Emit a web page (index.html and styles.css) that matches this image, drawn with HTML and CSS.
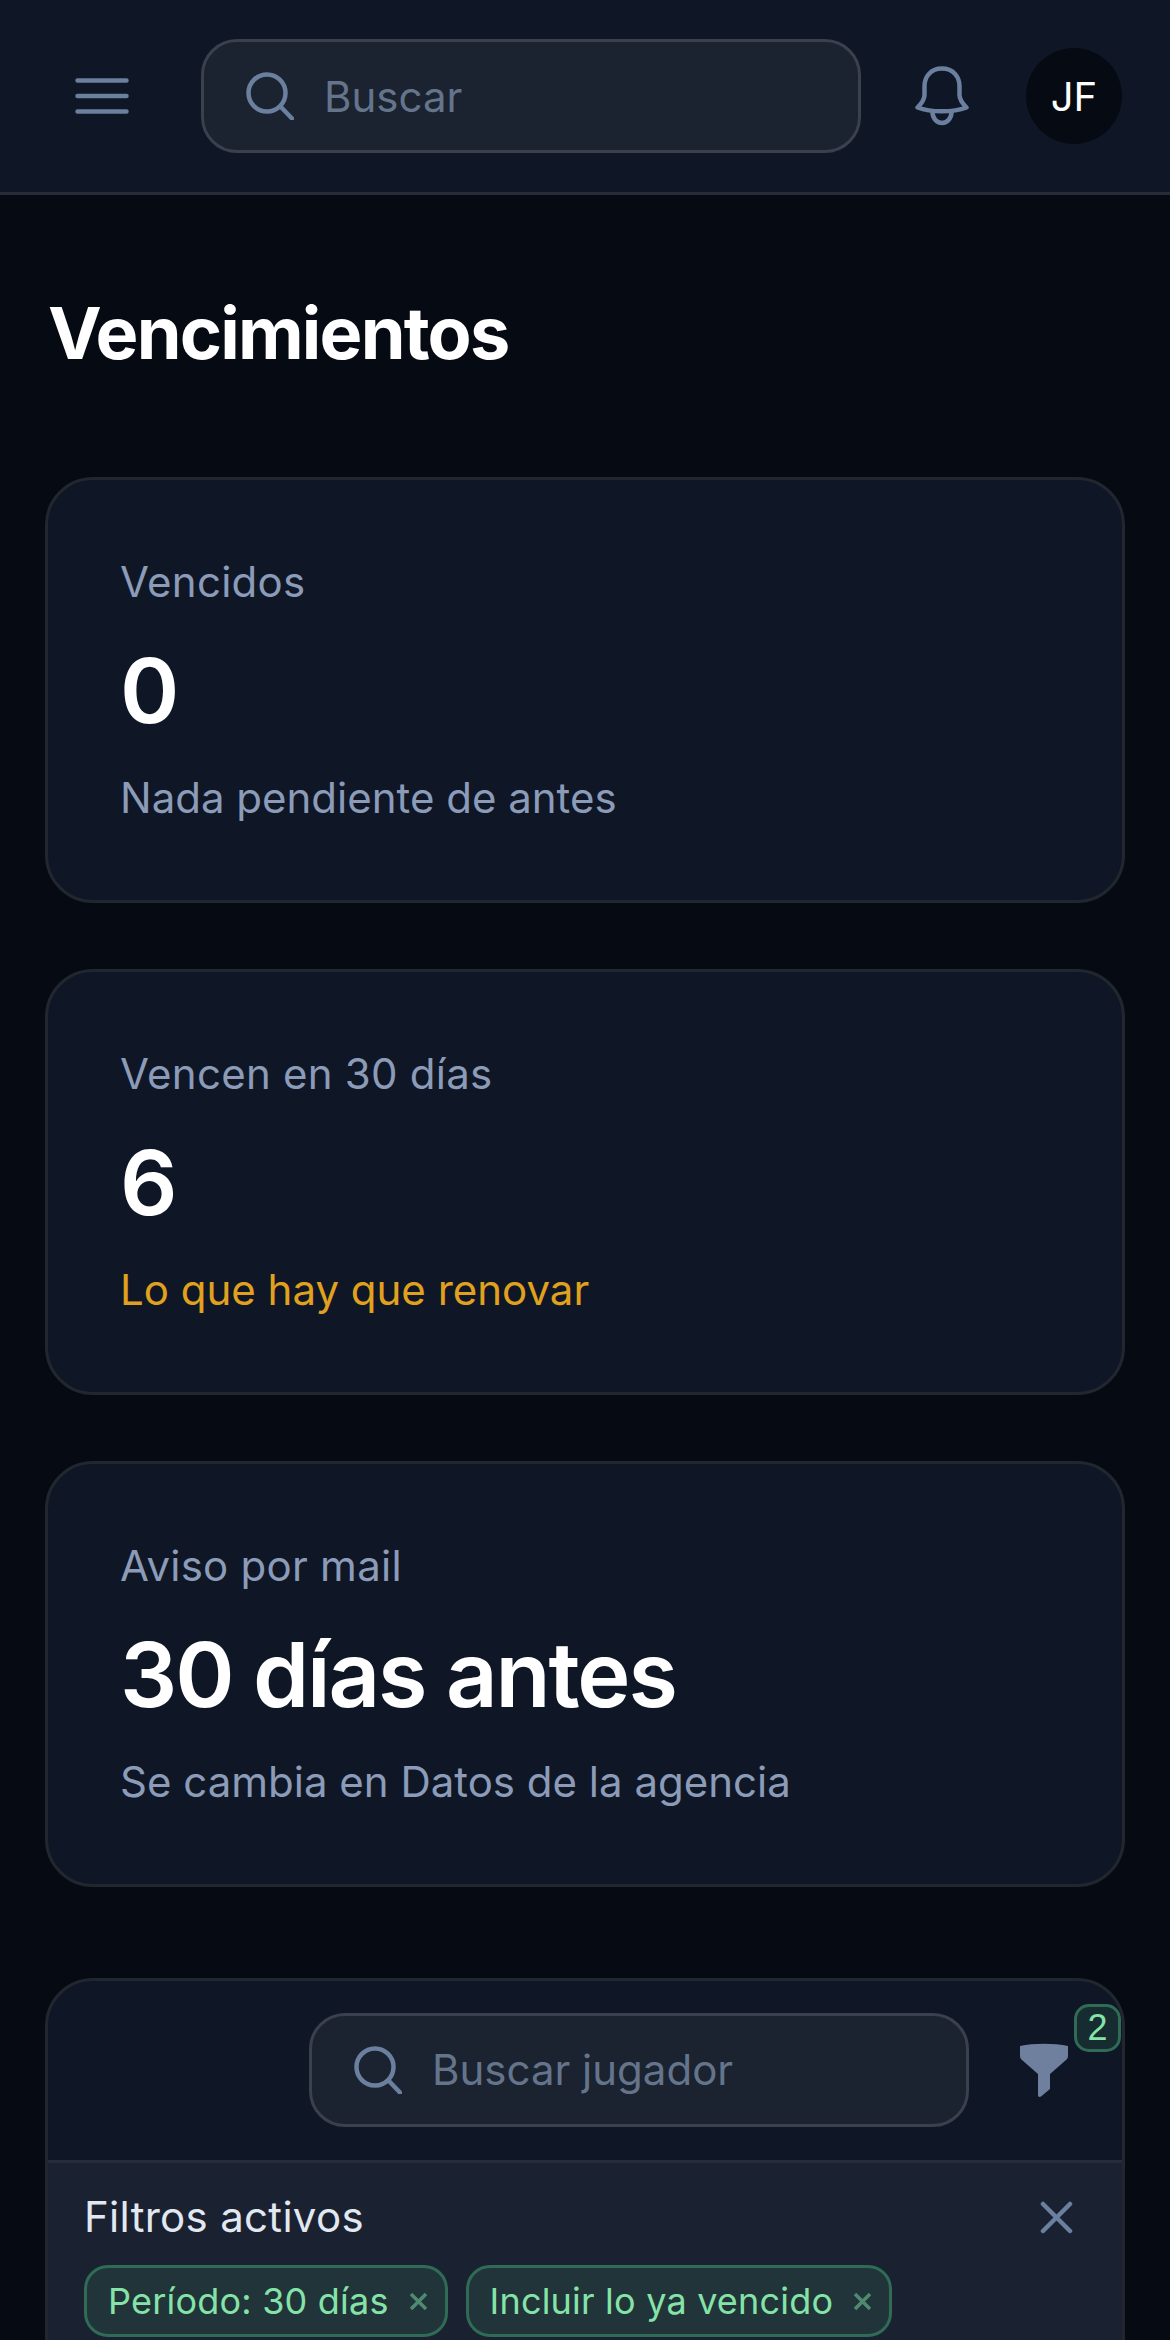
FILE: index.html
```html
<!DOCTYPE html>
<html lang="es">
<head>
  <meta charset="UTF-8">
  <meta name="viewport" content="width=device-width, initial-scale=1.0">
  <title>Vencimientos</title>
  <link rel="stylesheet" href="styles.css">
</head>
<body>
  <!-- Top bar -->
  <header class="topbar">
    <button class="menu-btn" aria-label="Menu">
      <svg width="54" height="36" viewBox="0 0 54 36" fill="none" stroke="#6b7f9f" stroke-width="4.5" stroke-linecap="round">
        <path d="M2.5 2.5H51.5M2.5 18H51.5M2.5 33.5H51.5"/>
      </svg>
    </button>
    <div class="search search-top">
      <svg class="search-icon" width="48" height="48" viewBox="0 0 48 48" fill="none" stroke="#6b7f9f" stroke-width="4.5" stroke-linecap="round">
        <circle cx="21" cy="21" r="18.5"/>
        <path d="M34.5 34.5L46 46.5"/>
      </svg>
      <span class="search-text">Buscar</span>
    </div>
    <button class="bell-btn" aria-label="Avisos">
      <svg width="54" height="60" viewBox="0 0 54 60" fill="none" stroke="#6b7f9f" stroke-width="4.5" stroke-linejoin="round">
        <path d="M27 2.5C16 2.5 9.5 10.5 9.5 20V29C9.5 34 6 38 2.5 41.5C16 46.5 38 46.5 51.5 41.5C48 38 44.500 34 44.500 29V20C44.500 10.5 38 2.500 27 2.500Z"/>
        <path d="M17.500 46C17.500 52 21.500 57 27 57C32.500 57 36.500 52 36.500 46"/>
      </svg>
    </button>
    <div class="avatar">JF</div>
  </header>

  <main class="content">
    <h1>Vencimientos</h1>

    <section class="card">
      <div class="card-label">Vencidos</div>
      <div class="card-value">0</div>
      <div class="card-note">Nada pendiente de antes</div>
    </section>

    <section class="card">
      <div class="card-label">Vencen en 30 días</div>
      <div class="card-value">6</div>
      <div class="card-note amber">Lo que hay que renovar</div>
    </section>

    <section class="card">
      <div class="card-label">Aviso por mail</div>
      <div class="card-value">30 días antes</div>
      <div class="card-note">Se cambia en Datos de la agencia</div>
    </section>

    <!-- Players table -->
    <section class="panel">
      <div class="toolbar">
        <div class="search search-player">
          <svg class="search-icon" width="48" height="48" viewBox="0 0 48 48" fill="none" stroke="#6b7f9f" stroke-width="4.5" stroke-linecap="round">
            <circle cx="21" cy="21" r="18.5"/>
            <path d="M34.5 34.5L46 46.5"/>
          </svg>
          <span class="search-text">Buscar jugador</span>
        </div>
        <button class="filter-btn" aria-label="Filtros">
          <svg width="48" height="54" viewBox="0 0 48 54" fill="#6f7f9e">
            <path d="M0 3C14 0 34 0 48 3V13C48 15 47 16 46 17L30 31V46L21 53.500C19.500 54.500 18 54 18 52V31L2 17C1 16 0 15 0 13Z"/>
          </svg>
          <span class="badge">2</span>
        </button>
      </div>
      <div class="active-filters">
        <div class="active-head">
          <span class="active-title">Filtros activos</span>
          <svg width="33" height="33" viewBox="0 0 33 33" fill="none" stroke="#6b7f9f" stroke-width="4.5" stroke-linecap="round">
            <path d="M3 3L30 30M30 3L3 30"/>
          </svg>
        </div>
        <div class="chips">
          <span class="chip">Período: 30 días
            <svg width="19" height="19" viewBox="0 0 19 19" fill="none" stroke="#4f8a70" stroke-width="3.5">
              <path d="M2 2L17 17M17 2L2 17"/>
            </svg>
          </span>
          <span class="chip">Incluir lo ya vencido
            <svg width="19" height="19" viewBox="0 0 19 19" fill="none" stroke="#4f8a70" stroke-width="3.5">
              <path d="M2 2L17 17M17 2L2 17"/>
            </svg>
          </span>
        </div>
      </div>
    </section>
  </main>
</body>
</html>
```

FILE: styles.css
```css
* {
  box-sizing: border-box;
}
html, body {
  margin: 0;
  height: 2340px;
  overflow: hidden;
}
body {
  font-family: Inter, "Liberation Sans", sans-serif;
  font-variation-settings: "opsz" 14;
  background-color: #060a12;
  color: #fff;
}
button {
  border: none;
  background: none;
  padding: 0;
  display: flex;
}
.topbar {
  display: flex;
  align-items: center;
  height: 195px;
  padding: 0 48px 0 75px;
  background-color: #0f1626;
  border-bottom: 3px solid #262b38;
}
.menu-btn {
  margin-right: 72px;
}
.search {
  display: flex;
  align-items: center;
  background-color: #1b2230;
  border: 3px solid #3a404e;
  border-radius: 36px;
}
.search-top {
  width: 660px;
  height: 114px;
  padding-left: 42px;
  margin-right: 54px;
}
.search-icon {
  flex-shrink: 0;
  margin-right: 30px;
}
.search-text {
  font-size: 42px;
  color: #64748b;
}
.bell-btn {
  margin-right: 57px;
}
.avatar {
  width: 96px;
  height: 96px;
  border-radius: 50%;
  background-color: #060a12;
  display: flex;
  align-items: center;
  justify-content: center;
  font-size: 40px;
}
.content {
  padding: 0 45px;
}
h1 {
  margin: 0;
  padding: 90px 3px 96px;
  font-size: 72px;
  line-height: 96px;
  font-weight: 700;
  font-variation-settings: "opsz" 24;
  letter-spacing: -1.8px;
}
.card {
  height: 426px;
  margin-bottom: 66px;
  padding: 72px;
  background-color: #0f1726;
  border: 3px solid #22272f;
  border-radius: 48px;
}
.card-label {
  font-size: 42px;
  line-height: 60px;
  letter-spacing: 0.25px;
  color: #8b9bb8;
}
.card-value {
  font-size: 90px;
  line-height: 108px;
  font-weight: 600;
  font-variation-settings: "opsz" 30;
  letter-spacing: -2.1px;
  margin-top: 25px;
}
.card-note {
  font-size: 42px;
  line-height: 60px;
  color: #8b9bb8;
  margin-top: 23px;
}
.card-note.amber {
  color: #e0a11f;
}
.panel {
  margin-top: 91px;
  background-color: #0f1626;
  border: 3px solid #22272f;
  border-radius: 48px;
  overflow: hidden;
}
.toolbar {
  display: flex;
  justify-content: flex-end;
  align-items: center;
  height: 182px;
  padding: 0 54px 2px 0;
  border-bottom: 3px solid #262c3a;
}
.search-player {
  width: 660px;
  height: 114px;
  padding-left: 42px;
  margin-right: 51px;
}
.filter-btn {
  position: relative;
}
.badge {
  position: absolute;
  top: -39px;
  left: 54px;
  width: 47px;
  height: 48px;
  display: flex;
  align-items: center;
  justify-content: center;
  border: 3px solid #2f6b55;
  border-radius: 15px;
  background-color: #172c30;
  color: #86e3a8;
  font-size: 36px;
}
.active-filters {
  padding: 24px 36px 60px;
  background-color: #1a2130;
}
.active-head {
  display: flex;
  justify-content: space-between;
  align-items: center;
  padding-right: 13px;
  margin-bottom: 18px;
}
.active-title {
  font-size: 42px;
  line-height: 60px;
  letter-spacing: 0.3px;
  color: #e2e8f0;
}
.chips {
  display: flex;
  flex-wrap: wrap;
  gap: 18px;
}
.chip {
  display: flex;
  align-items: center;
  gap: 20px;
  height: 72px;
  padding: 0 17px 0 21px;
  background-color: #20343a;
  border: 3px solid #2f6b55;
  border-radius: 24px;
  color: #86e3a8;
  font-size: 36px;
  letter-spacing: 0.2px;
}
```
